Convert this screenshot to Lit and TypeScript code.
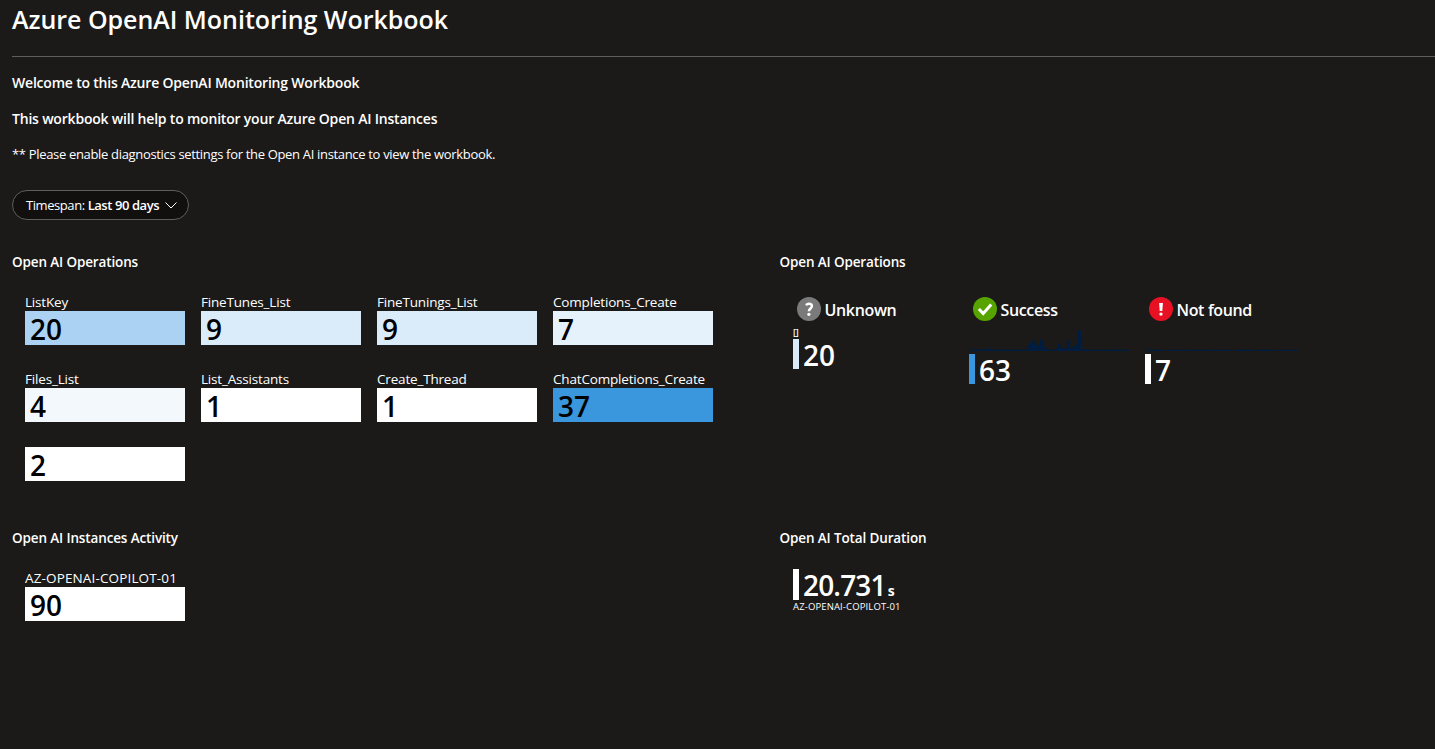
import { LitElement, html, svg, css } from "lit";
import { customElement, property } from "lit/decorators.js";

// [x, width, height] of each step in the success history
const SUCCESS_BARS: [number, number, number][] = [
  [0, 160, 1.3], [6, 2, 2], [14, 3, 2.3], [19, 3, 2.5], [25, 2, 2], [31, 2, 2], [40, 3, 2],
  [58.5, 3, 6], [61, 4.5, 8.5], [63, 2.2, 11], [65, 4, 7], [71, 3, 11], [69, 5, 5],
  [74, 2.5, 4], [76, 3, 3], [86, 3, 2], [88.7, 2.6, 7.5], [91, 3, 3.5], [94, 5, 2.5],
  [98.7, 2.6, 11], [101, 3, 3], [103.5, 3, 4.5], [106, 3, 6.5], [109, 3, 20.5], [112, 6, 1.8], [146, 5, 1.8],
];

@customElement("status-icon")
export class StatusIcon extends LitElement {
  @property() kind = "unknown";

  static styles = css`
    :host { display: block; width: 24px; height: 24px; }
    svg { display: block; }
  `;

  render() {
    const glyphs: Record<string, unknown> = {
      unknown: svg`<circle cx="12" cy="12" r="12" fill="#7a7a7a"/>
        <path d="M8.900 8.100C9.700 7.300 10.800 6.800 12 6.800c1.900 0 2.900.8 2.900 2.300 0 2.400-3 2.500-3 5.100" fill="none" stroke="#fff" stroke-width="2.500"/>
        <circle cx="11.900" cy="17.300" r="1.600" fill="#fff"/>`,
      success: svg`<circle cx="12" cy="12" r="12" fill="#57a300"/>
        <path d="M5.900 12l4.300 4.500L18.200 7.500" fill="none" stroke="#fff" stroke-width="3"/>`,
      error: svg`<circle cx="12" cy="12" r="12" fill="#e81123"/>
        <path d="M10.100 5.900h3.800l-.6 8h-2.600z" fill="#fff"/>
        <circle cx="12" cy="17.100" r="1.700" fill="#fff"/>`,
    };
    return html`<svg width="24" height="24" viewBox="0 0 24 24">${glyphs[this.kind]}</svg>`;
  }
}

@customElement("app-root")
export class AppRoot extends LitElement {
  static styles = css`
    :host {
      display: block;
      box-sizing: border-box;
      height: 749px;
      overflow: hidden;
      background: #1b1a19;
      color: #fff;
      font-family: "Segoe UI", "Open Sans", "Noto Sans", sans-serif;
      font-size: 13px;
      padding-left: 12px;
    }
    h1, h3, p { margin: 0; white-space: nowrap; }
    h1 { font-size: 25px; font-weight: 600; line-height: 34px; padding-top: 2px; height: 54px; border-bottom: 1px solid #605e5c; letter-spacing: -0.03px; }
    h3 { font-size: 13.5px; font-weight: 600; line-height: 20px; letter-spacing: -0.13px; }
    .intro { display: flex; flex-direction: column; gap: 16px; padding-top: 16px; }
    .intro h3 { font-size: 14px; letter-spacing: -0.2px; }
    .intro p { line-height: 18px; letter-spacing: -0.325px; }
    .pill { display: flex; align-items: center; box-sizing: border-box; width: 177px; height: 30px; margin-top: 27px; padding-left: 13px; border: 1px solid #605e5c; border-radius: 15px; background: #11100f; white-space: pre; letter-spacing: -0.43px; }
    .pill b { font-weight: 600; }
    .pill svg { margin-left: 5px; }
    .row { display: grid; grid-template-columns: 767.5px 1fr; }
    .first { margin-top: 32px; height: 276px; }
    .tiles { display: grid; grid-template-columns: repeat(4, 160px); column-gap: 16px; row-gap: 25px; padding: 21px 0 0 13px; }
    .label { font-size: 13.5px; line-height: 18px; height: 18px; white-space: nowrap; letter-spacing: -0.18px; }
    .instances .label { letter-spacing: 0.14px; }
    .value { height: 34px; padding-left: 5px; color: #000; font-size: 28px; line-height: 37px; font-weight: 600; }
    .c0 { background: #fff; } .c4 { background: #f3f8fd; } .c7 { background: #e5f1fb; }
    .c9 { background: #daebf9; } .c20 { background: #abd2f2; } .c37 { background: #3a96dd; }
    .states { display: grid; grid-template-columns: repeat(3, 160px); column-gap: 16px; padding: 25px 0 0 13.5px; }
    .head { display: flex; align-items: center; gap: 3.5px; padding-left: 4px; height: 24px; font-size: 16px; font-weight: 600; white-space: nowrap; letter-spacing: -0.35px; }
    .head span { padding-top: 2px; }
    .empty { font-size: 9px; font-weight: 600; line-height: 8px; height: 11px; margin-top: 7px; letter-spacing: -0.3px; }
    .spark { display: block; margin-top: 8px; }
    .metric { display: flex; height: 30px; font-size: 28px; line-height: 33px; font-weight: 600; white-space: nowrap; }
    .bar { width: 6px; height: 30px; margin-right: 4px; }
    .unit { font-size: 14px; font-weight: 700; margin-left: 2px; line-height: 20px; padding-top: 12px; height: 19px; }
    .duration { padding: 21px 0 0 13.5px; }
    .tall, .tall .bar { height: 31px; }
    .tall { letter-spacing: -0.85px; line-height: 33px; }
    .sub { font-size: 9.5px; line-height: 14px; white-space: nowrap; letter-spacing: 0.13px; }
  `;

  private tile(label: string, value: number, tone: string) {
    return html`<div>
      ${label ? html`<div class="label">${label}</div>` : ""}
      <div class="value ${tone}">${value}</div>
    </div>`;
  }

  private successSpark() {
    return html`<svg class="spark" width="160" height="25" viewBox="0 0 160 25">
      ${SUCCESS_BARS.map(([x, w, h]) => svg`<rect x=${x} y=${22 - h} width=${w} height=${h} fill="#001c3f"/>`)}
    </svg>`;
  }

  render() {
    return html`
      <h1>Azure OpenAI Monitoring Workbook</h1>
      <div class="intro">
        <h3>Welcome to this Azure OpenAI Monitoring Workbook</h3>
        <h3>This workbook will help to monitor your Azure Open AI Instances</h3>
        <p>** Please enable diagnostics settings for the Open AI instance to view the workbook.</p>
      </div>
      <div class="pill">Timespan: <b>Last 90 days</b><svg width="14" height="9" viewBox="0 0 14 9"><path d="M1.500 1.500L7 7l5.500-5.500" fill="none" stroke="#fff"/></svg></div>
      <div class="row first">
        <section>
          <h3>Open AI Operations</h3>
          <div class="tiles">
            ${this.tile("ListKey", 20, "c20")}${this.tile("FineTunes_List", 9, "c9")}
            ${this.tile("FineTunings_List", 9, "c9")}${this.tile("Completions_Create", 7, "c7")}
            ${this.tile("Files_List", 4, "c4")}${this.tile("List_Assistants", 1, "c0")}
            ${this.tile("Create_Thread", 1, "c0")}${this.tile("ChatCompletions_Create", 37, "c37")}
            ${this.tile("", 2, "c0")}
          </div>
        </section>
        <section>
          <h3>Open AI Operations</h3>
          <div class="states">
            <div>
              <div class="head"><status-icon kind="unknown"></status-icon><span>Unknown</span></div>
              <div class="empty">[]</div>
              <div class="metric"><span class="bar c9"></span>20</div>
            </div>
            <div>
              <div class="head"><status-icon kind="success"></status-icon><span>Success</span></div>
              ${this.successSpark()}
              <div class="metric"><span class="bar c37"></span>63</div>
            </div>
            <div>
              <div class="head"><status-icon kind="error"></status-icon><span>Not found</span></div>
              <svg class="spark" width="160" height="25"><path d="M0 21.400H153" stroke="#001c3f" stroke-width="1.200" stroke-dasharray="20.500 1.600"/></svg>
              <div class="metric"><span class="bar c0"></span>7</div>
            </div>
          </div>
        </section>
      </div>
      <div class="row">
        <section class="instances">
          <h3>Open AI Instances Activity</h3>
          <div class="tiles">${this.tile("AZ-OPENAI-COPILOT-01", 90, "c0")}</div>
        </section>
        <section>
          <h3>Open AI Total Duration</h3>
          <div class="duration">
            <div class="metric tall"><span class="bar c0"></span>20.731<span class="unit">s</span></div>
            <div class="sub">AZ-OPENAI-COPILOT-01</div>
          </div>
        </section>
      </div>
    `;
  }
}
